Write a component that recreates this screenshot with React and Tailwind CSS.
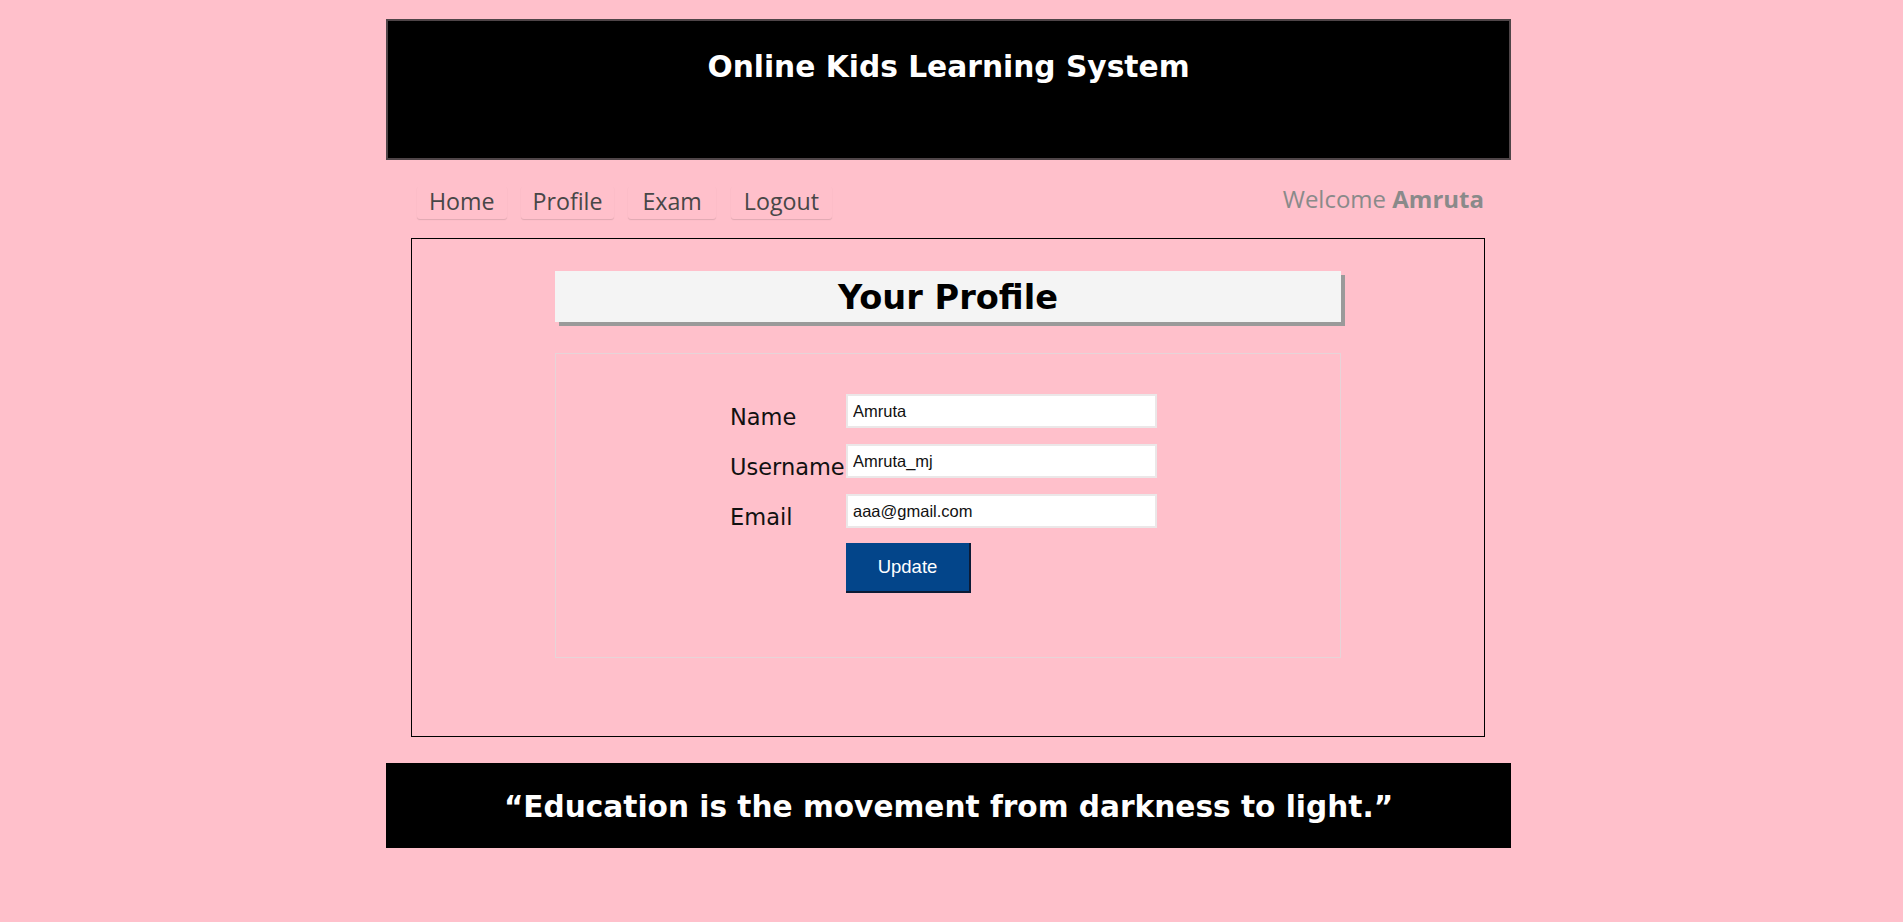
import React from "react";

const dejavu = { fontFamily: '"DejaVu Sans", Verdana, sans-serif' };
const opensans = { fontFamily: '"Open Sans", "Segoe UI", sans-serif' };
const arial = { fontFamily: '"Liberation Sans", Arial, sans-serif' };

function NavItem({ children, extra = "" }) {
  return (
    <a
      href="#"
      className={`block px-[12px] pb-[2px] rounded-[3px] text-[23.2px] text-[#474747] leading-[30.6px] shadow-[0_1px_1px_rgba(0,0,0,0.13)] ${extra}`}
      style={opensans}
    >
      {children}
    </a>
  );
}

function Field({ label, value }) {
  return (
    <>
      <div className="h-[34px] pt-[10px] text-[22.5px] leading-[26px] text-[#111] whitespace-nowrap" style={dejavu}>
        {label}
      </div>
      <input
        type="text"
        defaultValue={value}
        className="w-[311px] h-[34px] bg-white border-2 border-[#ebe7e8] pl-[5px] text-[16.5px] text-[#111] outline-none"
        style={arial}
      />
    </>
  );
}

export default function App() {
  return (
    <div className="min-h-[922px] bg-[#ffc0cb]">
      <div className="ml-[386px] w-[1125px] pt-[19px]">
        {/* Header */}
        <header className="h-[141px] bg-black border-2 border-[#4f4548] pt-[28px] text-center">
          <h1 className="text-[29.7px] font-bold text-white leading-[35px]" style={dejavu}>
            Online Kids Learning System
          </h1>
        </header>

        {/* Nav */}
        <nav className="h-[78px] flex items-start justify-between pt-[26px] pl-[31px] pr-[27px]">
          <div className="flex gap-[14px]">
            <NavItem>Home</NavItem>
            <NavItem>Profile</NavItem>
            <NavItem extra="px-[14px]">Exam</NavItem>
            <NavItem extra="ml-[1px] px-[13px]">Logout</NavItem>
          </div>
          <div className="-mt-[3px] text-[24px] leading-[32px] text-[#8a8a8a]" style={opensans}>
            Welcome <span className="font-bold">Amruta</span>
          </div>
        </nav>

        {/* Main */}
        <main className="ml-[25px] w-[1074px] h-[499px] border border-black pt-[32px]">
          <div className="mx-auto w-[786px]">
            <div className="h-[51px] bg-[#f4f4f4] shadow-[4px_4px_0_#9a9a9a] pt-[8px] text-center">
              <h2 className="text-[33.6px] font-bold text-black leading-[38px]" style={dejavu}>
                Your Profile
              </h2>
            </div>

            <div className="mt-[31px] h-[305px] border border-[#e6d4d8] pt-[40px] pl-[174px]">
              <form className="grid grid-cols-[116px_311px] items-start gap-y-[16px]">
                <Field label="Name" value="Amruta" />
                <Field label="Username" value="Amruta_mj" />
                <Field label="Email" value="aaa@gmail.com" />
              </form>
              <div className="pl-[116px] mt-[15px]">
                <button
                  type="button"
                  className="w-[125px] h-[50px] bg-[#03458a] border-r-2 border-b-2 border-[#0b1b36] text-white text-[18.5px]"
                  style={arial}
                >
                  Update
                </button>
              </div>
            </div>
          </div>
        </main>

        {/* Footer */}
        <footer className="mt-[26px] h-[85px] bg-black pt-[27px] text-center">
          <p className="text-[29.6px] font-bold text-white leading-[35px]" style={dejavu}>
            “Education is the movement from darkness to light.”
          </p>
        </footer>
      </div>
    </div>
  );
}
